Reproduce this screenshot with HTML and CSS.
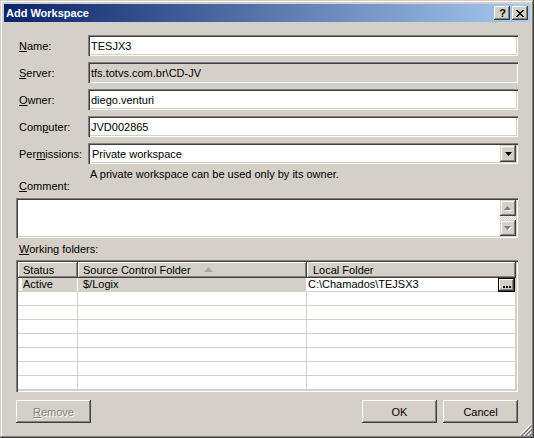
FILE: index.html
```html
<!DOCTYPE html>
<html>
<head>
<meta charset="utf-8">
<title>Add Workspace</title>
<link rel="stylesheet" href="styles.css">
</head>
<body>
<div class="window">
  <div class="titlebar">
    <span class="title">Add Workspace</span>
    <div class="caption">
      <div class="cbtn help">?</div>
      <div class="cbtn close">
        <svg width="8" height="7" viewBox="0 0 8 7"><path d="M0 0h2v1h-2zM6 0h2v1h-2zM1 1h2v1h-2zM5 1h2v1h-2zM2 2h4v1h-4zM3 3h2v1h-2zM2 4h4v1h-4zM1 5h2v1h-2zM5 5h2v1h-2zM0 6h2v1h-2zM6 6h2v1h-2z" fill="#000"/></svg>
      </div>
    </div>
  </div>
  <div class="content">
    <div class="form">
      <div class="lbl"><u>N</u>ame:</div><div class="field">TESJX3</div>
      <div class="lbl"><u>S</u>erver:</div><div class="field ro">tfs.totvs.com.br\CD-JV</div>
      <div class="lbl"><u>O</u>wner:</div><div class="field">diego.venturi</div>
      <div class="lbl">Com<u>p</u>uter:</div><div class="field">JVD002865</div>
      <div class="lbl">Per<u>m</u>issions:</div>
      <div class="field combo">
        <span class="ctext">Private workspace</span>
        <div class="dd"><svg width="7" height="4" viewBox="0 0 7 4"><path d="M0 0h7l-3.5 4z" fill="#000"/></svg></div>
      </div>
    </div>
    <div class="desc">A private workspace can be used only by its owner.</div>
    <div class="lbl2"><u>C</u>omment:</div>
    <div class="memo">
      <div class="vscroll">
        <div class="sbtn"><svg width="8" height="5" viewBox="0 0 8 5"><path d="M1 5h7l-3.5-4z" fill="#fff"/><path d="M0 4h7l-3.5-4z" fill="#808080"/></svg></div>
        <div class="track"></div>
        <div class="sbtn"><svg width="8" height="5" viewBox="0 0 8 5"><path d="M1 1h7l-3.5 4z" fill="#fff"/><path d="M0 0h7l-3.5 4z" fill="#808080"/></svg></div>
      </div>
    </div>
    <div class="lbl2 wf"><u>W</u>orking folders:</div>
    <div class="grid">
      <div class="ghead">
        <div class="hc c1">Status</div>
        <div class="hc c2">Source Control Folder<svg class="sort" width="9" height="5" viewBox="0 0 9 5"><path d="M0 5h9l-4.5-5z" fill="#aca899"/></svg></div>
        <div class="hc c3">Local Folder</div>
      </div>
      <div class="grow sel">
        <div class="gc c1"><span class="strip"></span>Active</div>
        <div class="gc c2">$/Logix</div>
        <div class="gc c3 edit">C:\Chamados\TEJSX3<div class="ell"><svg width="8" height="2" viewBox="0 0 8 2"><path d="M0 0h2v2h-2zM3 0h2v2h-2zM6 0h2v2h-2z" fill="#000"/></svg></div></div>
      </div>
      <div class="grow"><div class="gc c1"></div><div class="gc c2"></div><div class="gc c3"></div></div>
      <div class="grow"><div class="gc c1"></div><div class="gc c2"></div><div class="gc c3"></div></div>
      <div class="grow"><div class="gc c1"></div><div class="gc c2"></div><div class="gc c3"></div></div>
      <div class="grow"><div class="gc c1"></div><div class="gc c2"></div><div class="gc c3"></div></div>
      <div class="grow"><div class="gc c1"></div><div class="gc c2"></div><div class="gc c3"></div></div>
      <div class="grow"><div class="gc c1"></div><div class="gc c2"></div><div class="gc c3"></div></div>
      <div class="grow"><div class="gc c1"></div><div class="gc c2"></div><div class="gc c3"></div></div>
    </div>
    <div class="buttons">
      <div class="btn disabled"><u>R</u>emove</div>
      <div class="spacer"></div>
      <div class="btn">OK</div>
      <div class="btn">Cancel</div>
    </div>
  </div>
  <svg class="grip" width="12" height="12" viewBox="0 0 12 12">
    <path d="M11 0L0 11M11 4L4 11M11 8L8 11" stroke="#fff" stroke-width="1" fill="none"/>
    <path d="M12 1L1 12M12 2L2 12M12 5L5 12M12 6L6 12M12 9L9 12M12 10L10 12" stroke="#808080" stroke-width="1" fill="none"/>
  </svg>
</div>
</body>
</html>
```

FILE: styles.css
```css
* { box-sizing: border-box; }
html, body { margin: 0; padding: 0; background: #d4d0c8; }
body {
  font-family: "Liberation Sans", Arial, sans-serif;
  font-size: 11px;
  color: #000;
}
.window {
  position: relative;
  width: 534px;
  height: 438px;
  padding: 4px;
  background: #d4d0c8;
  display: flex;
  flex-direction: column;
  box-shadow: inset -1px -1px #404040, inset 1px 1px #d4d0c8, inset -2px -2px #808080, inset 2px 2px #fff;
}
.titlebar {
  height: 18px;
  flex: none;
  display: flex;
  align-items: center;
  background: linear-gradient(to right, #0a246a, #a6caf0);
  padding: 0 2px 0 2px;
}
.title {
  color: #fff;
  font-weight: bold;
  font-size: 11px;
  flex: 1;
  line-height: 18px;
}
.caption { display: flex; gap: 2px; }
.cbtn {
  width: 16px;
  height: 14px;
  display: flex;
  align-items: center;
  justify-content: center;
  background: #d4d0c8;
  box-shadow: inset -1px -1px #404040, inset 1px 1px #fff, inset -2px -2px #808080;
  font-weight: bold;
  font-size: 11px;
  line-height: 14px;
}
.cbtn.help { padding-left: 1px; }
.content {
  flex: 1;
  display: flex;
  flex-direction: column;
  padding: 13px 12px 12px 12px;
}
.form {
  display: grid;
  grid-template-columns: 72px 430px;
  grid-auto-rows: 21px;
  row-gap: 6px;
}
.lbl {
  padding-left: 3px;
  display: flex;
  align-items: center;
  white-space: nowrap;
}
.field {
  background: #fff;
  padding-left: 3px;
  display: flex;
  align-items: center;
  white-space: nowrap;
  box-shadow: inset 1px 1px #808080, inset 2px 2px #404040, inset -1px -1px #fff, inset -2px -2px #d4d0c8;
}
.field.ro { background: #d4d0c8; }
.combo { padding: 2px 2px 2px 4px; }
.ctext { flex: 1; }
.dd {
  width: 16px;
  height: 17px;
  display: flex;
  align-items: center;
  justify-content: center;
  background: #d4d0c8;
  box-shadow: inset -1px -1px #404040, inset 1px 1px #d4d0c8, inset -2px -2px #808080, inset 2px 2px #fff;
}
.desc {
  margin: 4px 0 0 74px;
  line-height: 12px;
  height: 12px;
}
.lbl2 {
  padding-left: 3px;
  line-height: 12px;
  height: 12px;
}
.memo {
  margin-top: 6px;
  height: 40px;
  background: #fff;
  padding: 2px;
  display: flex;
  justify-content: flex-end;
  box-shadow: inset 1px 1px #808080, inset 2px 2px #404040, inset -1px -1px #fff, inset -2px -2px #d4d0c8;
}
.vscroll {
  width: 16px;
  display: flex;
  flex-direction: column;
}
.sbtn {
  width: 16px;
  height: 16px;
  display: flex;
  align-items: center;
  justify-content: center;
  background: #d4d0c8;
  box-shadow: inset -1px -1px #404040, inset 1px 1px #d4d0c8, inset -2px -2px #808080, inset 2px 2px #fff;
}
.track {
  flex: 1;
  background: repeating-conic-gradient(#fff 0 25%, #d4d0c8 0 50%) 0 0 / 2px 2px;
}
.lbl2.wf { margin-top: 5px; line-height: 13px; height: 13px; }
.grid {
  margin-top: 4px;
  height: 132px;
  padding: 2px;
  background: #fff;
  display: flex;
  flex-direction: column;
  box-shadow: inset 1px 1px #808080, inset 2px 2px #404040, inset -1px -1px #fff, inset -2px -2px #d4d0c8;
}
.ghead { display: flex; height: 16px; flex: none; }
.hc {
  background: #d4d0c8;
  line-height: 14px;
  padding-left: 5px;
  display: flex;
  align-items: center;
  box-shadow: inset -1px -1px #404040, inset 1px 1px #fff, inset -2px -2px #808080;
  white-space: nowrap;
}
.hc.c3 { padding-left: 6px; }
.sort { margin-left: 13px; margin-top: -1px; }
.c1 { width: 60px; flex: none; }
.c2 { width: 229px; flex: none; }
.c3 { width: 209px; flex: none; }
.grow { display: flex; height: 14px; flex: none; }
.gc {
  border-right: 1px solid #d4d0c8;
  border-bottom: 1px solid #d4d0c8;
  line-height: 13px;
  padding-left: 5px;
  white-space: nowrap;
  display: flex;
  align-items: center;
}
.grow.sel .c1, .grow.sel .c2 { background: #d4d0c8; border-right-color: #fff; }
.grow.sel .c1 { padding-left: 1px; }
.strip { width: 3px; height: 13px; background: #f4f3ee; margin-right: 1px; flex: none; }
.gc.edit { position: relative; padding-left: 1px; background: #fff; }
.ell {
  position: absolute;
  right: 0;
  top: 0;
  width: 17px;
  height: 14px;
  background: #d4d0c8;
  border: 1px solid #000;
  display: flex;
  align-items: flex-end;
  justify-content: center;
  padding-bottom: 3px;
  box-shadow: inset -1px -1px #404040, inset 1px 1px #fff, inset -2px -2px #808080;
}
.buttons {
  margin-top: 8px;
  height: 23px;
  display: flex;
  gap: 6px;
}
.spacer { flex: 1; }
.btn {
  width: 75px;
  height: 23px;
  display: flex;
  align-items: center;
  justify-content: center;
  background: #d4d0c8;
  box-shadow: inset -1px -1px #404040, inset 1px 1px #fff, inset -2px -2px #808080;
}
.btn.disabled { color: #808080; text-shadow: 1px 1px #fff; }
.grip { position: absolute; right: 2px; bottom: 2px; }
```
